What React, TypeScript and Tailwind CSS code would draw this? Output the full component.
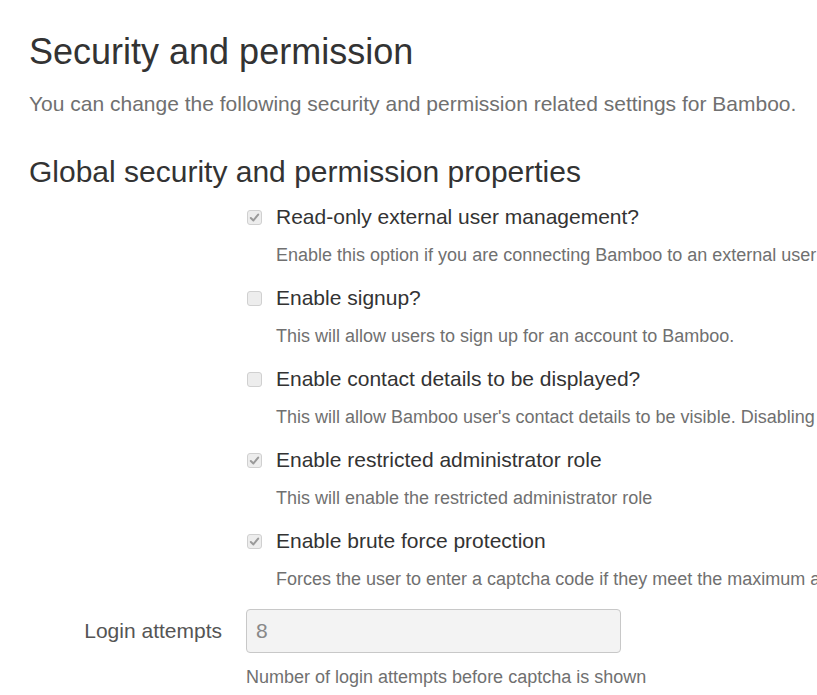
const rows = [
  {
    checked: true,
    label: "Read-only external user management?",
    help: "Enable this option if you are connecting Bamboo to an external user management system such as Crowd or LDAP.",
  },
  {
    checked: false,
    label: "Enable signup?",
    help: "This will allow users to sign up for an account to Bamboo.",
  },
  {
    checked: false,
    label: "Enable contact details to be displayed?",
    help: "This will allow Bamboo user's contact details to be visible. Disabling this option will hide them.",
  },
  {
    checked: true,
    label: "Enable restricted administrator role",
    help: "This will enable the restricted administrator role",
  },
  {
    checked: true,
    label: "Enable brute force protection",
    help: "Forces the user to enter a captcha code if they meet the maximum amount of failed login attempts.",
  },
];

function Box({ checked }: { checked: boolean }) {
  return (
    <span className="mt-[1px] flex h-[15px] w-[15px] shrink-0 items-center justify-center rounded-[3px] border border-[#d0d0d0] bg-[#ededed]">
      {checked && (
        <svg width="11" height="11" viewBox="0 0 12 12">
          <path
            d="M2 6.5 L4.8 9.2 L10 2.8"
            fill="none"
            stroke="#9a9a9a"
            strokeWidth="2.2"
            strokeLinecap="round"
            strokeLinejoin="round"
          />
        </svg>
      )}
    </span>
  );
}

export default function App() {
  return (
    <div className="h-[695px] w-[817px] overflow-hidden bg-white pl-[29px] pt-[30px] font-['Liberation_Sans',Arial,sans-serif] text-[#333]">
      <h1 className="text-[36px] leading-[44px] whitespace-nowrap">Security and permission</h1>
      <p className="mt-[18px] text-[21px] leading-[24px] text-[#707070] whitespace-nowrap">
        You can change the following security and permission related settings for Bamboo.
      </p>
      <h2 className="mt-[39px] text-[30px] leading-[34px] whitespace-nowrap">Global security and permission properties</h2>

      <div className="mt-[15px] flex flex-col pl-[218px]">
        {rows.map((r) => (
          <div key={r.label} className="flex h-[81px] flex-col">
            <label className="flex items-center gap-[14px] whitespace-nowrap text-[21px] leading-[26px]">
              <Box checked={r.checked} />
              {r.label}
            </label>
            <div className="mt-[14px] pl-[29px] text-[18px] leading-[22px] whitespace-nowrap text-[#707070]">
              {r.help}
            </div>
          </div>
        ))}
      </div>

      <div className="flex items-center">
        <div className="w-[193px] text-right text-[21px] text-[#555] whitespace-nowrap">Login attempts</div>
        <input
          disabled
          value="8"
          readOnly
          className="ml-[24px] h-[44px] w-[375px] rounded-[4px] border border-[#c8c8c8] bg-[#f3f3f3] px-[9px] text-[21px] text-[#888]"
        />
      </div>
      <div className="mt-[13px] pl-[217px] text-[18px] leading-[22px] text-[#707070] whitespace-nowrap">
        Number of login attempts before captcha is shown
      </div>
    </div>
  );
}
